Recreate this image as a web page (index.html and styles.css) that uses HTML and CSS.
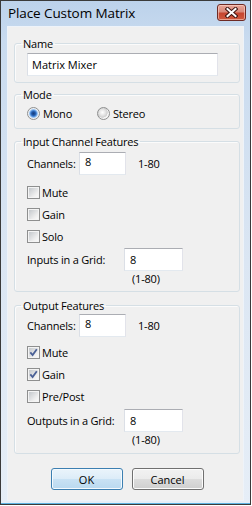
FILE: index.html
```html
<!DOCTYPE html>
<html>
<head>
<meta charset="utf-8">
<link rel="stylesheet" href="styles.css">
</head>
<body>
<div class="window">
  <div class="titlebar">
    <span class="title">Place Custom Matrix</span>
    <div class="close">
      <svg width="13" height="11" viewBox="0 0 13 11">
        <path d="M2.5 2 L10.5 9 M10.5 2 L2.5 9" stroke="#3d1410" stroke-width="4" stroke-linecap="square"/>
        <path d="M2.5 2 L10.5 9 M10.5 2 L2.5 9" stroke="#ffffff" stroke-width="2" stroke-linecap="square"/>
      </svg>
    </div>
  </div>
  <div class="client">
    <fieldset class="group group-name">
      <legend>Name</legend>
      <input class="tb tb-name" value="Matrix Mixer">
    </fieldset>

    <fieldset class="group group-mode">
      <legend>Mode</legend>
      <div class="radios">
        <label class="opt opt-mono"><span class="rb on"></span>Mono</label>
        <label class="opt"><span class="rb"></span>Stereo</label>
      </div>
    </fieldset>

    <fieldset class="group group-in">
      <legend>Input Channel Features</legend>
      <div class="field-row">
        <span class="lbl lbl-ch">Channels:</span>
        <input class="tb tb-ch" value="8">
        <span class="range">1-80</span>
      </div>
      <div class="checks">
        <div class="check"><span class="cb"></span>Mute</div>
        <div class="check"><span class="cb"></span>Gain</div>
        <div class="check"><span class="cb"></span>Solo</div>
      </div>
      <div class="field-row grid-row">
        <span class="lbl lbl-grid">Inputs in a Grid:</span>
        <input class="tb tb-grid" value="8">
      </div>
      <div class="note">(1-80)</div>
    </fieldset>

    <fieldset class="group group-out">
      <legend>Output Features</legend>
      <div class="field-row">
        <span class="lbl lbl-ch">Channels:</span>
        <input class="tb tb-ch" value="8">
        <span class="range">1-80</span>
      </div>
      <div class="checks">
        <div class="check"><span class="cb"><svg width="9" height="9" viewBox="0 0 9 9"><path d="M1.3 4.3 L3.6 7 L7.8 1.2" fill="none" stroke="#4a6096" stroke-width="1.8"/></svg></span>Mute</div>
        <div class="check"><span class="cb"><svg width="9" height="9" viewBox="0 0 9 9"><path d="M1.3 4.3 L3.6 7 L7.8 1.2" fill="none" stroke="#4a6096" stroke-width="1.8"/></svg></span>Gain</div>
        <div class="check"><span class="cb"></span>Pre/Post</div>
      </div>
      <div class="field-row grid-row">
        <span class="lbl lbl-grid">Outputs in a Grid:</span>
        <input class="tb tb-grid" value="8">
      </div>
      <div class="note">(1-80)</div>
    </fieldset>

    <div class="buttons">
      <button class="btn btn-default">OK</button>
      <button class="btn">Cancel</button>
    </div>
  </div>
</div>
</body>
</html>
```
FILE: styles.css
```css
* { box-sizing: border-box; }

body {
  margin: 0;
  background: #ffffff;
  font-family: "Open Sans", "Noto Sans", sans-serif;
  font-size: 11px;
  letter-spacing: -0.2px;
  color: #000;
}

.window {
  width: 251px;
  height: 505px;
  border: 1px solid #3a3a3a;
  background: linear-gradient(#bcd2eb, #c9dbef 40px, #dbe6f3 260px, #e6eef7);
  box-shadow: inset 0 -1px 0 #5cb3e2;
  display: flex;
  flex-direction: column;
}

.titlebar {
  height: 25px;
  flex: none;
  display: flex;
  justify-content: space-between;
  align-items: flex-start;
  padding: 0 4px 0 7px;
}

.title {
  font-size: 13.5px;
  letter-spacing: -0.1px;
  line-height: 25px;
}

.close {
  margin-top: 3px;
  width: 29px;
  height: 17px;
  border: 1px solid #6e2a24;
  border-radius: 3px;
  background: linear-gradient(#e9a598 0, #d88a7b 45%, #c6452f 55%, #cf5a3f 100%);
  box-shadow: inset 0 0 0 1px rgba(255, 220, 210, 0.55);
  display: flex;
  align-items: center;
  justify-content: center;
}

.client {
  flex: 1;
  margin: 0 6px 3px 6px;
  border: 1px solid #eef3f9;
  background: #f0f0f0;
  padding: 9px 3px 0 6px;
  display: flex;
  flex-direction: column;
}

.group {
  margin: 0;
  padding: 0 0 6px 12px;
  border: 1px solid #d5dfe5;
  border-radius: 3px;
  min-width: 0;
  box-shadow: inset 1px 1px 0 #fbfbfb;
}

.group legend {
  padding: 0 2px;
  margin-left: -6px;
  line-height: 15px;
}

.group-mode { margin-top: 4px; padding-bottom: 7px; }
.group-in { margin-top: 5px; padding-bottom: 5px; }
.group-out { margin-top: 6px; padding-bottom: 6px; }

.tb {
  display: block;
  font: inherit;
  color: #000;
  height: 23px;
  border: 1px solid;
  border-color: #abadb3 #e2e3ea #e3e9ef #dbdfe6;
  background: #fff;
  padding: 0 0 0 4px;
  outline: none;
  margin: 0;
}

.tb-name { width: 191px; margin-top: 2px; }

.radios {
  display: flex;
  height: 15px;
  margin-top: 4px;
  align-items: center;
}

.opt {
  display: flex;
  align-items: center;
  gap: 3px;
}

.opt-mono { width: 70px; }

.rb {
  width: 13px;
  height: 13px;
  border-radius: 50%;
  border: 1px solid #8e8f8f;
  background: radial-gradient(circle at 40% 40%, #ffffff 0, #e4e4e4 3px, #cfcfcf 5px, #f4f4f4 5.5px);
}

.rb.on {
  background: radial-gradient(circle at 50% 50%, #163e7c 0, #1f55a6 1.8px, #4a8ad8 3px, #9cc3ee 4px, #d4e4f6 4.6px, #f4f4f4 5.2px);
}

.field-row {
  display: flex;
  align-items: center;
  height: 23px;
}

.group-in .field-row:first-of-type { margin-top: 3px; }
.group-out .field-row:first-of-type { margin-top: 1px; }

.lbl-ch { width: 52px; }
.lbl-grid { width: 97px; }

.tb-ch { width: 47px; padding-left: 5px; padding-bottom: 5px; }
.tb-grid { width: 59px; padding-left: 5px; }

.range { margin-left: 12px; }

.checks { margin-top: 6px; }
.group-out .checks { margin-top: 4px; }

.check {
  display: flex;
  align-items: center;
  height: 22px;
  gap: 2px;
}

.cb {
  width: 13px;
  height: 13px;
  border: 1px solid #8e8f8f;
  padding: 1px;
  background: linear-gradient(135deg, #c4c8cc, #eeeeee 70%, #f9f9f9) content-box, #f4f4f4;
  display: flex;
}

.grid-row { margin-top: 1px; }
.group-out .grid-row { margin-top: 2px; }

.note {
  line-height: 15px;
  padding-left: 105px;
}

.buttons {
  display: flex;
  justify-content: center;
  gap: 9px;
  margin-top: 14px;
}

.btn {
  width: 72px;
  height: 22px;
  font: inherit;
  color: #000;
  border: 1px solid #707070;
  border-radius: 3px;
  background: linear-gradient(#f2f2f2 0, #ebebeb 50%, #dddddd 50%, #cfcfcf 100%);
  box-shadow: inset 0 0 0 1px #fcfcfc;
  padding: 0;
}

.btn-default {
  border-color: #3c7fb1;
  background: linear-gradient(#eaf4fb 0, #dcecf8 50%, #c9e2f4 50%, #b9d9f0 100%);
  box-shadow: inset 0 0 0 1px #f4fafe;
}
```
